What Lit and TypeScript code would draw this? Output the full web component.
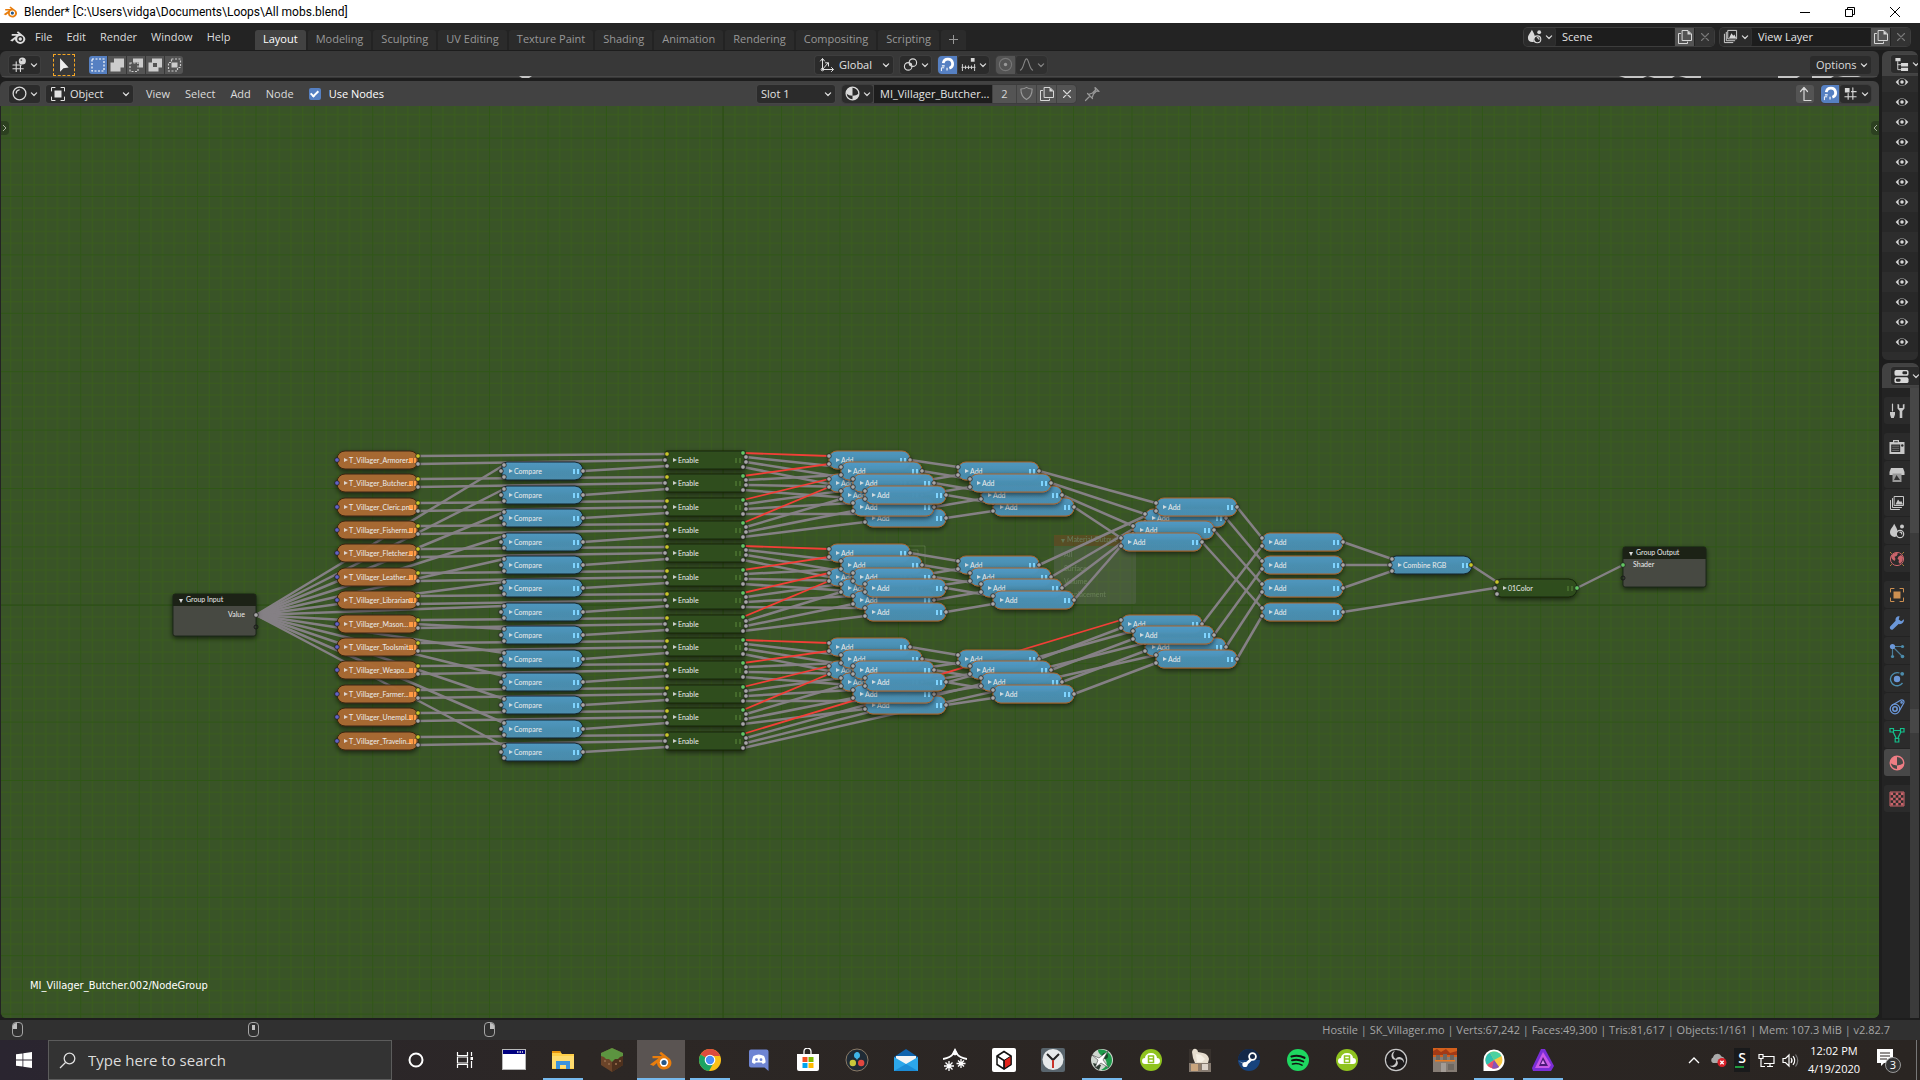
import { LitElement, html, svg, css } from "lit";
import { customElement, property } from "lit/decorators.js";
import { classMap } from "lit/directives/class-map.js";

/* ---------- icons, 16 unit box ---------- */
const S = (body: unknown, w = 1.2) => svg`<g fill="none" stroke="currentColor" stroke-width=${w} stroke-linecap="round" stroke-linejoin="round">${body}</g>`;
const F = (body: unknown) => svg`<g fill="currentColor">${body}</g>`;

const DROP = svg`${F(svg`<path d="M5.2 .8 C6.5 3.5 8.6 6 8.6 9 C7 10 6.8 12 7.4 13.6 C4 14.6 1 12.8 1 9.6 C1 6 4 3.8 5.2 .8Z"/><circle cx="13" cy="3.4" r="2"/>`)}${S(svg`<circle cx="11" cy="11" r="3.7"/><path d="M11 9.2a1.8 1.8 0 0 1 1.8 1.8"/>`)}`;
const PICS = svg`${S(svg`<path d="M5.5 1.5h9v9h-9z"/><path d="M3.5 3.5v9h9M1.5 5.5v9h9"/>`, 1)}${F(svg`<path d="M6.5 9.5l2.5-5 2 2.6 1.2-1.2 1.8 3.6z"/>`)}`;
const BALL = svg`<circle cx="8" cy="8" r="6.8" fill="none" stroke="currentColor" stroke-width="1.4"/><path d="M8 1.2A6.8 6.8 0 0 0 1.2 8q3 2.400 6.800 2.400V1.200zM8 10.400v4.400A6.800 6.800 0 0 0 14.800 8Q12 10.400 8 10.400z" fill="currentColor"/>`;
const ICONS: Record<string, unknown> = {
  blender: svg`<path d="M1 11.2 L6.6 6.9 H2.4 V5.4 H8.6 L6.9 4 L8 2.8 L13.2 7 A4.6 4.2 0 1 1 5.3 10 L3 12z" fill="currentColor"/><circle cx="10" cy="9.8" r="2.7" fill="#232323"/><circle cx="10" cy="9.8" r="1.5" fill="currentColor"/>`,
  chevron: S(svg`<path d="M4.5 6.5 8 10l3.5-3.5"/>`, 1.6),
  grid3d: svg`${S(svg`<path d="M1 8.5h9M1 12.5h11M4.5 5v10.5M9 9v6.5"/>`)}${F(svg`<circle cx="11" cy="4.3" r="3.8"/>`)}<circle cx="10" cy="3.3" r="1" fill="#555"/>`,
  shader: S(svg`<circle cx="8" cy="8" r="6.8"/><path d="M4.5 7.5a3.6 3.6 0 0 1 3.2-3.4"/>`, 1.4),
  cursor: F(svg`<path d="M4.5 2v12l3-3.2 4.6-.6z"/>`),
  object: svg`${S(svg`<path d="M1.5 5V1.5H5M11 1.5h3.500V5M14.500 11v3.500H11M5 14.500H1.500V11"/>`, 1)}${F(svg`<path d="M4.500 4.500h7v7h-7z"/>`)}`,
  m0: svg`<path d="M2 2h12v12H2z" fill="none" stroke="#fff" stroke-width="1.200" stroke-dasharray="2 1.500"/>`,
  m1: F(svg`<path d="M5 1.500h10v9h-3.500V14.500h-10v-9H5z"/>`),
  m2: svg`<path d="M2 6h8v8.500H2z" fill="none" stroke="currentColor" stroke-width="1.200" stroke-dasharray="2 1.500"/>${F(svg`<path d="M5 1.500h10v9h-4V5.500H5z"/>`)}`,
  m3: svg`<path d="M5 1.500h10v9h-3.500V14.500h-10v-9H5z M6 6v4h4V6z" fill="currentColor" fill-rule="evenodd"/>`,
  m4: svg`<path d="M5.500 2h9v8.500h-3V14h-9V5.500h3z" fill="none" stroke="currentColor" stroke-width="1.200" stroke-dasharray="2 1.500"/>${F(svg`<path d="M5.500 5.500h6v5h-6z"/>`)}`,
  axes: S(svg`<path d="M3.500 2v10.500H14M3.500 12.500 9 6M1.500 4l2-2.500 2 2.500M12.500 10.500l2 2-2 2M6.500 5.800H9.500V9"/><circle cx="3.500" cy="12.500" r="1.300"/>`, 1),
  pivot: svg`${S(svg`<circle cx="5.500" cy="10" r="4"/><circle cx="10.500" cy="6" r="4"/>`)}${F(svg`<circle cx="8" cy="8" r="1.500"/>`)}`,
  magnet: svg`<path d="M3.500 6.500A5 5 0 1 1 10 12" fill="none" stroke="#fff" stroke-width="3"/><path d="M2 9.500h3M7.500 14.500v-3" stroke="#fff" stroke-width="1.200"/><path d="M1.500 15v-3.500h3" fill="none" stroke="#fff"/>`,
  ruler: svg`${S(svg`<path d="M1 11h14M1.500 8v6.500M4.800 9.500v3M8 9.500v3M11.200 9.500v3M14.500 8v6.500"/>`, 1)}${F(svg`<path d="M10.500 1h4v4h-4z"/>`)}`,
  prop: svg`${S(svg`<circle cx="8" cy="8" r="6.500" opacity=".5"/>`)}${F(svg`<circle cx="8" cy="8" r="1.800"/>`)}`,
  falloff: S(svg`<path d="M1.500 14C5 13 5.500 2 8 2s3 11 6.500 12"/>`),
  copy: svg`${S(svg`<path d="M5.500 1.500h5.500l3.500 3.500v6.500h-9z"/><path d="M3.500 4.500h-2v10h9v-1.500"/>`, 1)}${F(svg`<path d="M10.500 1.500v4h4z"/>`)}`,
  x: S(svg`<path d="M4 4l8 8M12 4l-8 8"/>`, 1.3),
  shield: S(svg`<path d="M8 1.500c1.800 1.200 3.800 1.700 6 1.700 0 5-1.500 9-6 11.300-4.500-2.300-6-6.300-6-11.300 2.200 0 4.200-.5 6-1.700z"/>`),
  pin: S(svg`<path d="M1.500 14.500 6 10M3.500 7.500l5 5M4.500 8.500l4-1.500 3-3-.5-2.500 4 4-2.500-.5-3 3L8 12"/>`),
  up: S(svg`<path d="M7 14.500V2M3.500 5.500 7 1.500l3.500 4M7 14.500h7"/>`),
  nodegrid: svg`${S(svg`<path d="M10.500 2v12M5.500 8v6M2 11.500h12M9 6h5"/>`)}${F(svg`<path d="M2 2h5v5H2z"/>`)}`,
  drop: DROP,
  pics: PICS,
  ball: BALL,
  tree: svg`${F(svg`<path d="M1.500 1h5.500v3.500H1.500zM7.500 6.500H15V10H7.500zM7.500 11.500H15V15H7.500z"/>`)}${S(svg`<path d="M4 5v8.500h3M4 8.200h3"/>`, 1)}`,
  eye: svg`<path d="M.8 8Q8-.8 15.200 8 8 16.800.8 8z" fill="currentColor"/><circle cx="8" cy="8" r="4" fill="#282828"/><circle cx="8" cy="8" r="2" fill="currentColor"/>`,
  props: svg`<rect x=".5" y="1" width="15" height="6.200" rx="2" fill="currentColor"/><rect x=".5" y="8.800" width="15" height="6.200" rx="2" fill="currentColor"/><rect x="9" y="2.500" width="5" height="3.200" rx="1.200" fill="#2b2b2b"/><rect x="2" y="10.300" width="5" height="3.200" rx="1.200" fill="#2b2b2b"/>`,
  tool: svg`${S(svg`<path d="M3.500 1v7"/>`, 1.2)}${F(svg`<path d="M1 9h5v2.500L4.800 15H2.200L1 11.500zM8.500 1v4.500L10.700 8v7h2.600V8l2.200-2.500V1l-1.700.5V5h-3.600V1.500z"/>`)}`,
  render: svg`${F(svg`<path d="M4 1h6v2h5.500v12H.5V3H4z"/>`)}<path d="M2.200 5.500h9v7.500h-9z" fill="#2b2b2b"/><path d="M5.200 2.200h3.600v1H5.200z" fill="#2b2b2b"/><circle cx="13.300" cy="6.500" r="1.200" fill="#2b2b2b"/><path d="M3.200 7.200h7M3.200 9.300h7M3.200 11.400h7" stroke="#777" stroke-width=".9"/>`,
  output: svg`${F(svg`<path d="M2 1h12l1.500 4v3H.5V5z"/>`)}<path d="M3.500 6.500h9V15h-9z" fill="#999"/><path d="M5 13l2.500-5 3.500 5z" fill="#333"/>`,
  world: svg`<circle cx="8" cy="8" r="6.600" fill="none" stroke="currentColor"/><path d="M4.500 2.500l3-.8 1.500 1-1.500 2.300-2 .8L6.500 8l-1 2-2.500-2L2 5.500zM9.500 5.500l2.500-1.500 2 2-.5 4-2.500 3-1.500-2 .5-2-1.500-1.200z" fill="currentColor"/><path d="M1 1l1.800 1.800M15 1l-1.800 1.800M1 15l1.800-1.800M15 15l-1.800-1.800" stroke="#a8803c"/>`,
  wrench: F(svg`<path d="M15 4.200l-2.800 2-2.500-1.800L10.600 1.200C8 .9 6 3 6.600 5.800L1 11.800c-.8 1.800 1 3.600 2.800 2.800L9.600 9c3 .8 5.600-1.600 5.400-4.800z"/>`),
  particles: svg`<g stroke="#4c7c98" stroke-width="1.200"><path d="M3.500 3.500V13M3.500 3.500H13M3.500 3.500 13.500 13.500"/></g><circle cx="3.500" cy="3.500" r="2.600" fill="currentColor"/><g fill="#4c8cac"><circle cx="13.500" cy="3.500" r="1.600"/><circle cx="3.500" cy="13.500" r="1.600"/><circle cx="13.500" cy="13.500" r="1.800"/></g>`,
  physics: svg`<path d="M10.500 2A6.600 6.600 0 1 0 13.500 12" fill="none" stroke="#4c8cac" stroke-width="1.300"/><circle cx="8" cy="8" r="3.200" fill="currentColor"/><circle cx="13.200" cy="2.800" r="1.900" fill="#4c8cac"/>`,
  constraint: svg`${S(svg`<circle cx="6" cy="10" r="4.800"/><path d="M3 6.200 12 1c2-.6 3.500 1 2.800 3L10.800 11"/><circle cx="12.600" cy="3.400" r=".7"/>`, 1.2)}<circle cx="6" cy="10" r="2.200" fill="none" stroke="currentColor" stroke-width="1.600"/>`,
  mesh: svg`<path d="M3.500 3.500h9L8 13z" fill="none" stroke="currentColor" stroke-width="1.200"/><g fill="#2b2b2b" stroke="currentColor" stroke-width="1.200"><path d="M1 1.500h3.500V5H1zM11.500 1.500H15V5h-3.500zM6.200 11.500h3.600V15H6.200z"/></g>`,
  texture: svg`<path d="M1 1h14v14H1z" fill="none" stroke="currentColor"/>${[0, 1, 2, 3, 4].map((r) => [0, 1, 2, 3, 4].filter((c) => (r + c) % 2 === 0).map((c) => svg`<rect x=${1.5 + c * 2.6} y=${1.5 + r * 2.6} width="2.600" height="2.600" fill="currentColor"/>`))}`,
};
const icon = (n: string, size = 16) => html`<svg class="ic" width=${size} height=${size} viewBox="0 0 16 16" aria-hidden="true">${ICONS[n]}</svg>`;

/* ---------- taskbar artwork, 24 unit box ---------- */
const cloudLogo = svg`<circle cx="12" cy="12" r="11" fill="#8fc31f"/><path d="M6 16a3 3 0 0 1 0-6 6 5 0 0 1 12 0 3 3 0 0 1 0 6z" fill="#fff"/><path d="M9.500 8h5v6.500h-5zM9.500 11h5" fill="none" stroke="#8fc31f" stroke-width="1.500"/>`;
const blenderLogo = svg`<path d="M1 16.500 L9.500 10.300 H3.500 V8 H13 L10.300 5.500 L12 3.800 L20.500 10.500 A7.200 6.600 0 1 1 8 15 L4.500 18z" fill="#e87d0d"/><circle cx="15" cy="14.500" r="4.200" fill="#fff"/><circle cx="15" cy="14.500" r="2.600" fill="#265787"/>`;
const APPS: { name: string; art: unknown; on?: string }[] = [
  { name: "Cortana", art: svg`<circle cx="12" cy="12" r="6.500" fill="none" stroke="#fff" stroke-width="2"/>` },
  { name: "Task View", art: svg`<g fill="none" stroke="#fff" stroke-width="1.200"><path d="M4.500 4v3.500h10V4M4.500 20v-3.500h10V20M4.500 9h10v6h-10zM18.500 4v4M18.500 13v7"/></g><path d="M17.500 9h2.500v3h-2.500z" fill="#fff"/>` },
  { name: "Window", art: svg`<path d="M0 1h24v21H0z" fill="#b8b8b8"/><path d="M1 2h22v4H1z" fill="#000080"/><path d="M1 6h22v15H1z" fill="#fff"/><path d="M15 4h6" stroke="#ddd" stroke-width="1.500" stroke-dasharray="1.500 1"/>` },
  { name: "File Explorer", on: "run", art: svg`<path d="M1 3h8l2 3h12v15H1z" fill="#ffcf48"/><path d="M1 3h8l1 2H1z" fill="#e8940c"/><path d="M1 8h22v12H1z" fill="#ffdc6e"/><path d="M5 21v-8h14v8h-4v-4H9v4z" fill="#3a93dd"/>` },
  { name: "Minecraft", art: svg`<path d="M12 0l11 5v12l-11 7-11-7V5z" fill="#6b4429"/><path d="M12 12l11-6v11l-11 7z" fill="#4d301d"/><path d="M12 0l11 5v3l-3 1-2 2-3 0-3 3-3-3-3 0-2-2-3-1V5z" fill="#5c9440"/><path d="M4 12h2v2H4zM8 15h2v2H8zM15 15h2v2h-2zM19 12h2v2h-2z" fill="#8b6243"/>` },
  { name: "Blender", on: "active", art: blenderLogo },
  { name: "Chrome", on: "run", art: svg`<circle cx="12" cy="12" r="11" fill="#fbc116"/><path d="M12 12 2.500 6.500A11 11 0 0 1 21.500 6.500L22 8H12z" fill="#dd4b3e"/><path d="M12 12 2.500 6.500A11 11 0 0 0 11 23l4.500-8z" fill="#1da362"/><circle cx="12" cy="12" r="5.300" fill="#fff"/><circle cx="12" cy="12" r="4.200" fill="#4a8cf5"/>` },
  { name: "Discord", art: svg`<path d="M4 1.500h15.500A2 2 0 0 1 21.500 3.500V23l-4-3.500H4a2 2 0 0 1-2-2v-14a2 2 0 0 1 2-2z" fill="#6f85d3"/><path d="M6.500 8c3.500-2 7-2 10.500 0 1 2 1.800 4.500 1.500 6.500-1 1-2 1.300-3 1.300l-.8-1.300h-6l-.7 1.300c-1 0-2-.5-3-1.300-.3-2 .5-4.500 1.500-6.500z" fill="#fff"/><circle cx="9.500" cy="11.700" r="1.400" fill="#6f85d3"/><circle cx="14" cy="11.700" r="1.400" fill="#6f85d3"/>` },
  { name: "Microsoft Store", art: svg`<path d="M8 7V3.500a3.500 3.500 0 0 1 7 0V7" fill="none" stroke="#fff" stroke-width="1.300"/><path d="M1 6h22v15a2 2 0 0 1-2 2H3a2 2 0 0 1-2-2z" fill="#fff"/><path d="M6.500 9h5v5h-5z" fill="#f25022"/><path d="M12.500 9h5v5h-5z" fill="#7fba00"/><path d="M6.500 15h5v5h-5z" fill="#00a4ef"/><path d="M12.500 15h5v5h-5z" fill="#ffb900"/>` },
  { name: "DaVinci Resolve", art: svg`<circle cx="12" cy="12" r="11" fill="#1f2b36" stroke="#8a7a66"/><path d="M12 12C9 8 9 4.500 12 4s3 4 0 8z" fill="#3fa9e0"/><circle cx="12" cy="7.500" r="3" fill="#3fb5e8"/><circle cx="7.800" cy="15" r="3.200" fill="#c9c83a"/><circle cx="16.200" cy="15" r="3.200" fill="#e2473f"/>` },
  { name: "Mail", art: svg`<path d="M0 9 12 1l12 8v14H0z" fill="#0f63ad"/><path d="M2 8h20v8H2z" fill="#f4f4f4"/><path d="M0 9l12 7 12-7v14H0z" fill="#2ca7ea"/><path d="M0 23 12 16l12 7z" fill="#1b8cd6"/>` },
  { name: "Weather", art: svg`<path d="M0 11c5-1 8-2 10-5l2-4 2 4c2 3 5 4 10 5" fill="none" stroke="#fff" stroke-width="1.800"/><path d="M9 6l3-5 3 5-3 1.500z" fill="#fff"/><g stroke="#fff" stroke-width="1.300"><path d="M6 13v10M1 18h10M2.500 14.500l7 7M9.500 14.500l-7 7M18 11v9M13.500 15.500h9M15 12.500l6 6M21 12.500l-6 6"/></g>` },
  { name: "Block Editor", art: svg`<rect width="24" height="24" rx="2" fill="#fff"/><path d="M12 3.500 19 8v8.500l-7 4.500-7-4.500V8z" fill="#fff" stroke="#111" stroke-width="1.500"/><path d="M12 12.500 19 8v8.500l-7 4.500z" fill="#e2231a" stroke="#111"/><path d="M5 8l7 4.500V21" fill="none" stroke="#111" stroke-width="1.500"/>` },
  { name: "Clock", art: svg`<rect width="24" height="24" rx="2" fill="#59656d"/><circle cx="12" cy="11.500" r="10.500" fill="#e6e9ea"/><path d="M6 6l6 6 6-6" fill="none" stroke="#222" stroke-width="2"/><path d="M12 12v8" stroke="#c8342b" stroke-width="2"/>` },
  { name: "Aircraft", on: "run", art: svg`<circle cx="12" cy="12" r="11" fill="#cfd6cf"/><path d="M8 2c6-2 14 3 14 10s-6 11-11 10c6-3 7-7 4-11S8 6 8 2z" fill="#1e9a4a"/><path d="M3 15a10 10 0 0 0 6 7l2-5z" fill="#2c3a30"/><circle cx="15" cy="8" r="3" fill="#111" opacity=".6"/><path d="M2 7l7 3 9-7-5 9 6 8-8-5-6 5 3-8z" fill="#fff" stroke="#444" stroke-width=".6"/>` },
  { name: "Cloud Backup", art: cloudLogo },
  { name: "Photo", art: svg`<path d="M1 1h22v23H1z" fill="#38322e"/><path d="M1 15h22v9H1z" fill="#857a70"/><path d="M4 4q1-4 4-3 2 1 2 3l5 1q5 1 6 6l-1 4H7L5 10z" fill="#e6ddcf"/><path d="M8 6l5 1 4 4-3 3H9z" fill="#f5efe4"/><path d="M3 16h7v7H3z" fill="#c9a57e"/><path d="M14 16h6v6h-6z" fill="#ddd3ca"/><path d="M10 15h3v8h-3z" fill="#8d7a69"/>` },
  { name: "Steam", art: svg`<circle cx="12" cy="12" r="11" fill="#17437d"/><path d="M1 12a11 11 0 0 1 22 0z" fill="#132748"/><circle cx="15.500" cy="8.500" r="3.400" fill="none" stroke="#fff" stroke-width="1.800"/><path d="M1.500 13l6 2.500L13 10.500l2 2-5.500 5z" fill="#fff"/><circle cx="8" cy="16.500" r="2.600" fill="#fff"/>` },
  { name: "Spotify", art: svg`<circle cx="12" cy="12" r="11" fill="#1ed760"/><g fill="none" stroke="#111" stroke-linecap="round"><path d="M5.500 8.500c4.500-1.300 9-.8 13 1.300" stroke-width="2.200"/><path d="M6 12.300c4-1 7.700-.6 11.300 1.200" stroke-width="1.900"/><path d="M6.500 16c3.300-.8 6.500-.5 9.500 1.100" stroke-width="1.600"/></g>` },
  { name: "Cloud Sync", art: cloudLogo },
  { name: "OBS Studio", art: svg`<circle cx="12" cy="12" r="10.600" fill="#1d1b1c" stroke="#c8c8c8" stroke-width="1.200"/><g fill="#c8c8c8"><path d="M11 3c-3 3-2 7 2 8.500-3 1-5-.5-5.500-3S8.500 3.500 11 3z"/><path d="M20 15c-1-4-5-5-8.500-2.500C12 9.500 14 8.500 16.500 9.200S20.500 12.500 20 15z"/><path d="M5.500 17.500c4 1.300 7-1.500 6.500-5.700 2.500 2 2.300 4.500.5 6.300s-5 1.200-7-.6z"/></g>` },
  { name: "Sunset", art: svg`<path d="M0 0h24v24H0z" fill="#857c74"/><path d="M0 0h24v9H0z" fill="#d4601c"/><path d="M0 3l4-2 4 3 5-3 4 4 7-2v4H0z" fill="#a33a16"/><path d="M3 7h4v6H3zM10 6h4v7h-4zM17 7h4v6h-4z" fill="#6e655e"/><path d="M2 12h20v1.500H2z" fill="#e8791f"/><path d="M8 15h5v9H8z" fill="#a39c96"/><path d="M15 16h6v6h-6z" fill="#6f6861"/>` },
  { name: "Paint Drop", on: "run", art: svg`<path d="M1.500 12A10.500 10.500 0 0 1 22.500 12 10.500 10.500 0 0 1 12 23H1.500z" fill="#fff"/><circle cx="12" cy="12" r="8.500" fill="#f7c843"/><path d="M12 12 5 17A8.500 8.500 0 0 1 8 4.500z" fill="#2fc0b2"/><path d="M12 12 8 4.500A8.500 8.500 0 0 1 19.500 8z" fill="#4bd2a0"/><path d="M12 12 5 17A8.500 8.500 0 0 0 17 19z" fill="#e94f6e"/><path d="M12 12l-2 8.300A8.500 8.500 0 0 0 17 19z" fill="#8655b8"/>` },
  { name: "Affinity", on: "run", art: svg`<path d="M10 1h4l9 17-3 5H2l-1-3z" fill="#7b2ed6"/><path d="M12 4 4 20h14l2-3z" fill="#c957e8"/><path d="M12 9l-4 9h9z" fill="#4c1a78"/><path d="M12 12l-2 4h4z" fill="#e08af2"/>` },
];

/* ---------- node graph ---------- */
const PITCH = 23.4;
const row = (n: number) => Math.round(459.75 + PITCH * n);
type Sock = [number, number, string];
interface GNode { x: number; y: number; label: string; kind: string; socks: Sock[] }
const GREY = "#a8a8a8", YEL = "#c7c729", GRN = "#63c763", BLU = "#6363c7";
const TEX = ["Armorer..", "Butcher...", "Cleric.pn..", "Fisherm...", "Fletcher...", "Leather...", "Librarian...", "Mason...", "Toolsmit...", "Weapo...", "Farmer...", "Unempl...", "Travelin..."];
const add = (x: number, y: number): GNode => ({ x, y, label: "Add", kind: "add", socks: [[0, -4, GREY], [0, 4, GREY], [81, 0, GREY]] });

const first: GNode[] = TEX.map((t, i) => ({ x: 337, y: row(i), label: "T_Villager_" + t, kind: "tex", socks: [[0, 0, BLU], [81, -4, YEL], [81, 4, GREY]] }));
const compares: GNode[] = TEX.map((_, i) => ({ x: 502, y: row(i + 0.5), label: "Compare", kind: "math", socks: [[2, -6, GREY], [-1, 0, GREY], [2, 6, GREY], [81, 0, GREY]] }));
const enables: GNode[] = TEX.map((_, i) => ({ x: 666, y: row(i), label: "Enable", kind: "group", socks: [[1, -6, YEL], [-1, 0, GREY], [1, 6, GREY], [77, -7, GRN], [80, -3, GREY], [80, 2, GREY], [77, 7, GREY]] }));

const links: { p: number[]; red?: boolean }[] = [];
const link = (a: GNode, i: number, b: GNode, j: number, red = false) => links.push({ p: [a.x + a.socks[i][0], a.y + a.socks[i][1], b.x + b.socks[j][0], b.y + b.socks[j][1]], red });
TEX.forEach((_, i) => {
  links.push({ p: [256, 615, 504, compares[i].y - 6] });
  link(first[i], 1, enables[i], 0);
  link(first[i], 2, enables[i], 1);
  link(compares[i], 3, enables[i], 2);
});
const XA = [829, 841, 853, 865], XB = [958, 970, 981, 993], XC = [1156, 1145, 1133, 1121];
const adds: GNode[] = [];
const stage2: GNode[][] = [];
for (let g = 0; g < 3; g++) {
  const upper = XA.map((x, k) => add(x, row(g * 4 + k / 2)));
  const lower = XA.map((x, k) => add(x, row(g * 4 + 1 + k / 2)));
  const out = XB.map((x, k) => add(x, row(g * 4 + 0.5 + k / 2)));
  for (let k = 0; k < 4; k++) {
    link(enables[g * 4], 3 + k, upper[k], 0, k === 0);
    link(enables[g * 4 + 1], 3 + k, upper[k], 1, k === 0);
    link(enables[g * 4 + 2], 3 + k, lower[k], 0, k === 0);
    link(enables[g * 4 + 3], 3 + k, lower[k], 1, k === 0);
    link(upper[k], 2, out[k], 0);
    link(lower[k], 2, out[k], 1);
  }
  const tail = g === 1 ? [upper[2], upper[3], lower[3]] : [upper[2], upper[3]];
  const head = g === 1 ? [] : [lower[3]];
  adds.push(upper[0], lower[0], lower[1], ...head, upper[1], lower[2], ...tail);
  adds.push(...(g === 0 ? [out[3], out[2], out[0], out[1]] : out));
  stage2.push(out);
}
const topC = XC.map((x, k) => add(x, row(2 + k / 2)));
const lowC = [...XC].reverse().map((x, k) => add(x, row(7 + k / 2)));
const sum = [0, 1, 2, 3].map((k) => add(1262, row(3.5 + k)));
const combine: GNode = { x: 1391, y: row(4.5), label: "Combine RGB", kind: "math", socks: [[1, -6, GREY], [-1, 0, GREY], [1, 6, GREY], [80, 0, YEL]] };
const color: GNode = { x: 1496, y: row(5.5), label: "01Color", kind: "group", socks: [[1, -6, YEL], [-1, 0, GREY], [1, 6, GREY], [81, 0, GRN]] };
for (let k = 0; k < 4; k++) {
  link(stage2[0][k], 2, topC[k], 0);
  link(stage2[1][k], 2, topC[k], 1);
  link(enables[12], 3 + k, lowC[k], 0, k === 0);
  link(stage2[2][k], 2, lowC[k], 1);
  link(topC[k], 2, sum[k], 0);
  link(lowC[k], 2, sum[k], 1);
}
link(sum[0], 2, combine, 0);
link(sum[1], 2, combine, 1);
link(sum[2], 2, combine, 2);
link(sum[3], 2, color, 1);
link(combine, 3, color, 0);
links.push({ p: [1577, color.y, 1623, 565] });
const nodes: GNode[] = [...first, ...compares, ...enables, ...adds, topC[1], topC[0], topC[2], topC[3], lowC[0], lowC[2], lowC[1], lowC[3], ...sum, combine, color];

const shapes: Record<string, { fill: string; edge: string; bars: string }> = {
  tex: { fill: "#ad6b33", edge: "#3a2411", bars: "#ff9a45" },
  math: { fill: "url(#blue)", edge: "#12242c", bars: "#7fd4ff" },
  add: { fill: "url(#blue)", edge: "#a8632f", bars: "#7fd4ff" },
  group: { fill: "#2f4f1c", edge: "#16260d", bars: "#5d8a3c" },
};
const sock = (x: number, y: number, c: string) => svg`<circle cx=${x} cy=${y} r="2.300" fill=${c} stroke="#1a1a1a" stroke-width=".7"/>`;
const drawNode = (n: GNode) => {
  const s = shapes[n.kind];
  const w = n.label === "Enable" ? 79 : 81;
  const body = n.kind === "tex" || n.kind === "add"
    ? svg`<rect x=${n.x} y=${n.y - 9} width=${w} height="18" rx="8"/>`
    : n.label === "Enable"
      ? svg`<rect x=${n.x} y=${n.y - 9} width=${w} height="18" rx="1"/>`
      : svg`<path d="M${n.x + 5} ${n.y - 9}h${w - 13}q8 1 8 9t-8 9h-${w - 13}q-5-1-5-5v-8q0-4 5-5z"/>`;
  const bx = n.x + w - 9;
  return svg`<g>
    <g fill=${s.fill} fill-opacity=".93" stroke=${s.edge} filter="url(#shadow)">${body}</g>
    <path d=${`M${n.x + 7} ${n.y - 2}l4 2-4 2z`} fill="#e6e6e6" fill-opacity=".85"/>
    <path d=${n.kind === "tex" ? `M${bx + 1} ${n.y - 2}v5M${bx + 3} ${n.y - 2}v5M${bx + 6} ${n.y - 2}v5` : `M${bx} ${n.y - 2}v5M${bx + 4} ${n.y - 2}v5`} stroke=${s.bars} stroke-width=${n.kind === "group" ? 1 : 2}/>
    <text class="nt" x=${n.x + 12} y=${n.y + 3}>${n.label}</text>
    ${n.socks.map(([dx, dy, c]) => sock(n.x + dx, n.y + dy, c))}
  </g>`;
};
const openNode = (x: number, y: number, h: number, title: string) => svg`
  <g filter="url(#shadow)"><rect x=${x} y=${y} width="83" height=${h} rx="2" fill="#464a42" stroke="#1d2418"/>
  <path d="M${x} ${y + 12}v-10q0-2 2-2h79q2 0 2 2v10z" fill="#1b2416"/></g>
  <path d="M${x + 6} ${y + 5}h4l-2 4z" fill="#ddd"/><text class="nt" x=${x + 13} y=${y + 8}>${title}</text>`;

const graph = svg`
  <defs>
    <pattern id="fine" width="58.4" height="58.4" patternUnits="userSpaceOnUse" x="255.500" y="137.600">
      <path d="M12.200 0v58.400M23.800 0v58.400M35.500 0v58.400M47.200 0v58.400M0 12.200h58.400M0 23.800h58.400M0 35.500h58.400M0 47.200h58.400" stroke="#3a6118" stroke-opacity=".7"/>
      <path d="M.5 0v58.400M0 .5h58.400" stroke="#2f5616"/>
    </pattern>
    <linearGradient id="blue" x1="0" y1="0" x2="0" y2="1"><stop offset="0" stop-color="#529cc9"/><stop offset=".5" stop-color="#4b93b8"/><stop offset="1" stop-color="#4b90b2"/></linearGradient>
    <filter id="shadow" x="-20%" y="-50%" width="140%" height="220%"><feDropShadow dx="0" dy="2" stdDeviation="2.500" flood-color="#000" flood-opacity=".6"/></filter>
  </defs>
  <g transform="translate(0 -106)">
    <rect x="0" y="106" width="100%" height="100%" fill="#395427"/>
    <rect x="0" y="106" width="100%" height="100%" fill="url(#fine)"/>
    <path d="M723 106v2000M0 605h9000" stroke="#2c4d17"/>
    <g opacity=".25"><rect x="1054" y="535" width="82" height="69" rx="2" fill="#777"/><path d="M1054 535h82v11h-82z" fill="#b23a20"/>
      <path d="M1061 539h4l-2 4z" fill="#ddd"/>
      <text class="nt" x="1067" y="542">Material Output</text><text class="nt" x="1064" y="557">All</text><text class="nt" x="1064" y="571">Surface</text><text class="nt" x="1064" y="584">Volume</text><text class="nt" x="1064" y="597">Displacement</text>
      <path d="M904 546h21v18h-16M904 550h14v10" fill="none" stroke="#b5c49a"/></g>
    <g fill="none" stroke="#858085" stroke-width="2.500">${links.filter((l) => !l.red).map(({ p }) => svg`<path d=${`M${p[0]} ${p[1]}L${p[2]} ${p[3]}`}/>`)}</g>
    <g fill="none" stroke="#f23f38" stroke-width="1.800">${links.filter((l) => l.red).map(({ p }) => svg`<path d=${`M${p[0]} ${p[1]}L${p[2]} ${p[3]}`}/>`)}</g>
    ${openNode(173, 594, 42, "Group Input")}
    <text class="nt" x="228" y="617">Value</text>${sock(256, 615, GREY)}<circle cx="256" cy="627" r="2" fill="none" stroke="#1a1a1a"/>
    ${nodes.map(drawNode)}
    ${openNode(1623, 547, 40, "Group Output")}
    <text class="nt" x="1633" y="567">Shader</text>${sock(1623, 565, GRN)}<circle cx="1623" cy="578" r="2" fill="none" stroke="#1a1a1a"/>
  </g>`;

const controls = css`
  * { box-sizing: border-box; }
  button, input, select { font: inherit; color: inherit; margin: 0; padding: 0; border: 0; background: none; border-radius: 0; }
  svg { display: block; flex: none; }
`;

/** Drop-down that shows an icon and a chevron. */
@customElement("icon-menu")
class IconMenu extends LitElement {
  @property() icon = "";
  @property() label = "";
  static styles = [controls, css`
    :host { display: block; flex: none; }
    .b { display: flex; align-items: center; gap: 1px; height: 18px; width: 31px; padding-left: 3px; background: #2b2b2b; border-radius: 3px; color: #d8d8d8; box-shadow: 0 0 0 1px #4a4a4a55; overflow: hidden; }
    :host([dim]) .b { color: #858585; background: #303030; }
  `];
  render() {
    return html`<button class="b" aria-label=${this.label}>${icon(this.icon, 15)}${icon("chevron", 12)}</button>`;
  }
}

/** The whole desktop: application window above the taskbar. */
@customElement("app-root")
class AppRoot extends LitElement {
  static styles = [controls, css`
    :host { display: block; font: 11px/14px "Open Sans", "Noto Sans", sans-serif; color: #dcdcdc; }
    .page { display: flex; flex-direction: column; min-height: 100vh; background: #1d1d1d; overflow: hidden; }
    .title { display: flex; align-items: center; height: 23px; background: #fff; color: #000; padding: 0 3px; gap: 6px; font: 12px/16px Roboto, "Noto Sans", sans-serif; }
    .title h1 { font: inherit; margin: 0; flex: 1; }
    .wc { display: flex; }
    .wc button { width: 45px; height: 23px; display: grid; place-items: center; }
    .menubar { display: flex; align-items: center; height: 27px; background: #232323; padding: 0 10px 0 9px; }
    .brand { width: 26px; color: #ddd; }
    .menus { display: flex; gap: 14px; width: 220px; }
    .tabs { display: flex; gap: 2px; align-self: flex-end; flex: 1; }
    .tabs button { height: 20px; padding: 0 8px 2px; background: #2b2b2b; color: #989898; border-radius: 3px 3px 0 0; }
    .tabs .on { background: #424242; color: #fff; }
    .data { display: flex; gap: 6px; }
    .group { display: flex; gap: 1px; border-radius: 4px; overflow: hidden; box-shadow: 0 0 0 1px #3d3d3d; }
    .field { width: 118px; height: 18px; background: #1d1d1d; padding: 0 0 0 6px; color: #e4e4e4; }
    .sq { width: 19px; height: 18px; display: grid; place-items: center; background: #545454; color: #d8d8d8; }
    .sq.off { background: #333; color: #777; }
    .sq.num { width: 23px; }
    .sq.dim { color: #999; }
    .sq.blue { background: #5680c2; color: #fff; }
    .round { border-radius: 3px; }
    .work { display: flex; flex: 1; gap: 3px; padding-top: 1px; }
    .left { flex: 1; min-width: 0; display: flex; flex-direction: column; gap: 3px; }
    .bar { display: grid; grid-template-columns: 806fr 981fr 75px; align-items: center; padding: 0 8px 0 9px; }
    .bar > div { display: flex; align-items: center; }
    .bar > .end { justify-content: flex-end; }
    .toolbar { height: 27px; background: #383838; border-radius: 6px; position: relative; overflow: hidden; }
    .peek { position: absolute; left: 0; right: 0; bottom: 0; width: 100%; height: 2px; }
    .nodebar { height: 25px; background: #424242; border-radius: 6px 6px 0 0; grid-template-columns: 748fr 1039fr 75px; }
    .editor { display: flex; flex-direction: column; flex: 1; }
    .cur { width: 22px; height: 22px; margin: 0 14px 0 13px; border: 1px dashed #f5a623; display: grid; place-items: center; color: #eee; }
    .modes { display: flex; border-radius: 3px; overflow: hidden; gap: 1px; }
    .modes .sq { width: 18px; color: #ccc; }
    .g7 { gap: 7px; }
    .pick { position: relative; display: flex; align-items: center; height: 18px; border-radius: 3px; background: #2b2b2b; box-shadow: 0 0 0 1px #4a4a4a55; color: #e2e2e2; padding-left: 4px; gap: 4px; }
    .pick select { appearance: none; height: 18px; flex: 1; min-width: 0; outline: 0; }
    .pick .ic:last-child { position: absolute; right: 1px; pointer-events: none; }
    .w78 { width: 78px; } .w87 { width: 87px; }
    .opts { display: flex; align-items: center; height: 18px; width: 61px; justify-content: space-between; background: #2b2b2b; border-radius: 3px; padding: 0 1px 0 6px; }
    .shaderkind { margin-left: 6px; }
    .nmenus { display: flex; gap: 15px; margin: 0 15px 0 13px; }
    .chk { display: flex; align-items: center; gap: 8px; color: #fff; }
    .chk input { appearance: none; width: 12px; height: 12px; border-radius: 2px; background: #5680c2; display: grid; place-items: center; }
    .chk input::after { content: ""; width: 3px; height: 6px; margin-bottom: 2px; border: solid #fff; border-width: 0 2px 2px 0; transform: rotate(45deg); }
    .pin { color: #999; margin-left: 1px; }
    .canvas { position: relative; flex: 1; border-left: 1px solid #232323; border-radius: 0 0 6px 6px; overflow: hidden; min-height: 600px; background: #395427; }
    .canvas .graph { position: absolute; inset: 0 0 0 -1px; width: calc(100% + 1px); height: 100%; }
    .nt { font: 7px Lato, "Noto Sans", sans-serif; fill: #ececec; }
    .path { position: absolute; left: 29px; bottom: 25px; margin: 0; color: #fff; font-family: "DejaVu Sans Condensed", "Open Sans", sans-serif; }
    .flap { position: absolute; top: 15px; width: 8px; height: 14px; background: #2c4020; color: #a8b09f; display: grid; place-items: center; }
    .flap.l { left: 0; border-radius: 0 4px 4px 0; }
    .flap.r { right: 0; border-radius: 4px 0 0 4px; }
    .side { width: 38px; display: flex; flex-direction: column; gap: 3px; }
    .outliner { background: #282828; border-radius: 6px; overflow: hidden; height: 309px; flex: none; margin-right: 2px; }
    .shead { height: 25px; background: #424242; padding: 4px 0 0 9px; overflow: hidden; position: relative; border-radius: 6px 6px 0 0; }
    .rows { list-style: none; margin: -4px 0 0; padding: 0; }
    .rows li { height: 20px; display: grid; place-items: center; padding-left: 4px; color: #d8d8d8; }
    .rows li:nth-child(even) { background: #282828; }
    .rows li:nth-child(odd) { background: #2d2d2d; }
    .props { flex: 1; display: flex; flex-direction: column; background: #232323; margin-right: 1px; border-radius: 6px 6px 0 0; overflow: hidden; }
    .pbody { flex: 1; display: flex; justify-content: space-between; padding-left: 2px; }
    .ptabs { padding-top: 9px; display: flex; flex-direction: column; gap: 1px; }
    .ptabs button { width: 26px; height: 27px; background: #2b2b2b; border-radius: 3px 0 0 3px; display: grid; place-items: center; color: #c8c8c8; }
    .ptabs .gap { margin-top: 8px; }
    .ptabs .on { background: #484848; }
    .ptabs .red { color: #c9646a; } .ptabs .org { color: #cd8f50; } .ptabs .blu { color: #6b97d8; } .ptabs .grn { color: #14c08c; } .ptabs .pnk { color: #ee7d84; }
    .strip { width: 9px; background: #3b3b3b; display: flex; flex-direction: column; }
    .s1 { height: 145px; background: #474747; } .s2 { height: 176px; } .s3 { height: 24px; background: #474747; }
    .status { display: flex; align-items: center; height: 20px; margin-top: 2px; background: #303030; color: #a5a5a5; padding: 0 30px 0 12px; }
    .mice { display: flex; gap: 225px; flex: 1; }
    .status p { margin: 0; }
    .task { display: flex; height: 40px; background: linear-gradient(90deg, #2a2530, #2c2725 30%, #2a2522); color: #fff; }
    .start { width: 48px; display: grid; place-items: center; }
    .search { width: 344px; display: flex; align-items: center; gap: 12px; padding-left: 10px; background: #333; border: 1px solid #5c5c5c; }
    .search input { flex: 1; min-width: 0; font-size: 15px; outline: 0; }
    .search input::placeholder { color: #dcdcdc; opacity: 1; }
    .apps { display: flex; gap: 1px; flex: 1; }
    .apps button { width: 48px; display: grid; place-items: center; border: solid transparent; border-width: 2px 0; position: relative; }
    .apps .active { background: #5a5452; border-bottom-color: #76b9ed; }
    .apps .run::after { content: ""; position: absolute; left: 4px; right: 4px; bottom: -2px; height: 2px; background: #76b9ed; }
    .tray { display: flex; align-items: center; }
    .tray button { width: 24px; height: 40px; display: grid; place-items: center; }
    .tray .clock { display: block; width: 64px; padding: 2px 0; text-align: center; line-height: 18px; }
    .tray .note { width: 44px; margin-right: 6px; }
    .edge { width: 4px; align-self: stretch; border-left: 1px solid #777; }
  `];

  private dataGroup(ic: string, label: string, value: string) {
    return html`<div class="group"><icon-menu icon=${ic} label=${"Browse " + label}></icon-menu>
      <input class="field" aria-label=${label} .value=${value} />
      <button class="sq" aria-label=${"New " + label}>${icon("copy")}</button>
      <button class="sq off" aria-label=${"Remove " + label}>${icon("x", 14)}</button></div>`;
  }

  private mouse(part: string) {
    const d: Record<string, string> = { left: "M1 7V4q0-3 4-3v6z", mid: "M4 3h3v5H4z", right: "M6 1q4 0 4 3v3H6z" };
    return html`<svg width="11" height="16" viewBox="0 0 11 16" aria-hidden="true"><rect x=".5" y=".5" width="10" height="14" rx="3.500" fill="none" stroke="#a5a5a5"/><path d=${d[part]} fill="#c0c0c0"/></svg>`;
  }

  render() {
    const tabs = ["Layout", "Modeling", "Sculpting", "UV Editing", "Texture Paint", "Shading", "Animation", "Rendering", "Compositing", "Scripting"];
    const ptabs: [string, string, string][] = [
      ["tool", "", "Tool"], ["render", "gap", "Render"], ["output", "", "Output"], ["pics", "", "View Layer"], ["drop", "", "Scene"], ["world", "red", "World"],
      ["object", "gap org", "Object"], ["wrench", "blu", "Modifiers"], ["particles", "blu", "Particles"], ["physics", "blu", "Physics"], ["constraint", "blu", "Constraints"], ["mesh", "grn", "Mesh Data"], ["ball", "pnk on", "Material"], ["texture", "gap red", "Texture"],
    ];
    return html`<div class="page">
      <header class="title">
        <svg width="15" height="15" viewBox="0 0 24 24" aria-hidden="true">${blenderLogo}</svg>
        <h1>Blender* [C:\\Users\\vidga\\Documents\\Loops\\All mobs.blend]</h1>
        <div class="wc">
          <button aria-label="Minimize"><svg width="10" height="10"><path d="M0 5.500h10" stroke="#000"/></svg></button>
          <button aria-label="Restore"><svg width="10" height="10" fill="none" stroke="#000"><path d="M.5 2.500h7v7h-7zM2.500 2V.5h7v7H8"/></svg></button>
          <button aria-label="Close"><svg width="10" height="10" stroke="#000"><path d="M0 0l10 10M10 0 0 10"/></svg></button>
        </div>
      </header>
      <nav class="menubar">
        <div class="brand">${icon("blender", 18)}</div>
        <div class="menus">${["File", "Edit", "Render", "Window", "Help"].map((m) => html`<button>${m}</button>`)}</div>
        <div class="tabs">${tabs.map((t, i) => html`<button class=${classMap({ on: i === 0 })}>${t}</button>`)}
          <button class="plus" aria-label="Add workspace"><svg width="9" height="9" stroke="currentColor"><path d="M0 4.500h9M4.500 0v9"/></svg></button></div>
        <div class="data">${this.dataGroup("drop", "Scene", "Scene")}${this.dataGroup("pics", "View Layer", "View Layer")}</div>
      </nav>
      <main class="work">
        <div class="left">
          <section class="bar toolbar">
            <div><icon-menu icon="grid3d" label="Editor type"></icon-menu>
              <button class="cur" aria-label="Select tool">${icon("cursor", 18)}</button>
              <div class="modes">${[0, 1, 2, 3, 4].map((m) => html`<button class=${classMap({ sq: true, blue: m === 0 })} aria-label=${"Select mode " + (m + 1)}>${icon("m" + m)}</button>`)}</div></div>
            <div class="g7">
              <label class="pick w78">${icon("axes")}<select aria-label="Orientation"><option>Global</option></select>${icon("chevron", 12)}</label>
              <icon-menu icon="pivot" label="Pivot point"></icon-menu>
              <div class="group"><button class="sq blue" aria-label="Snap">${icon("magnet", 15)}</button><icon-menu icon="ruler" label="Snap to"></icon-menu></div>
              <div class="group"><button class="sq dim" aria-label="Proportional editing">${icon("prop", 15)}</button><icon-menu dim icon="falloff" label="Falloff"></icon-menu></div>
            </div>
            <div class="end"><button class="opts">Options ${icon("chevron", 12)}</button></div>
            <svg class="peek" viewBox="0 0 1879 2" preserveAspectRatio="none" aria-hidden="true"><path d="M0 .5h1879" stroke="#484848"/><path d="M519 0h13l-3 2h-7zM1619 0h28l-4 2h-18zM1648 0h27l-3 2h-18zM1679 0h22v2h-15zM1778 0h22l-3 2h-19zM1812 0h22l-3 2h-19zM1838 0h23l-3 1h-15z" fill="#c4c4c4"/></svg>
          </section>
          <section class="editor">
            <div class="bar nodebar">
              <div><icon-menu icon="shader" label="Editor type"></icon-menu>
                <label class="pick w87 shaderkind">${icon("object")}<select aria-label="Shader type"><option>Object</option></select>${icon("chevron", 12)}</label>
                <div class="nmenus">${["View", "Select", "Add", "Node"].map((m) => html`<button>${m}</button>`)}</div>
                <label class="chk"><input type="checkbox" checked />Use Nodes</label></div>
              <div class="g7">
                <label class="pick w78"><select aria-label="Material slot"><option>Slot 1</option></select>${icon("chevron", 12)}</label>
                <div class="group"><icon-menu icon="ball" label="Browse material"></icon-menu>
                  <input class="field" aria-label="Material name" .value=${"MI_Villager_Butcher..."} />
                  <button class="sq num">2</button><button class="sq dim" aria-label="Fake user">${icon("shield", 15)}</button>
                  <button class="sq" aria-label="New material">${icon("copy")}</button><button class="sq" aria-label="Unlink material">${icon("x", 14)}</button></div>
                <button class="pin" aria-label="Pin">${icon("pin")}</button>
              </div>
              <div class="g7 end"><button class="sq round" aria-label="Parent node tree">${icon("up")}</button>
                <div class="group"><button class="sq blue" aria-label="Snap">${icon("magnet", 15)}</button><icon-menu icon="nodegrid" label="Snap node to"></icon-menu></div></div>
            </div>
            <div class="canvas">
              <svg class="graph">${graph}</svg>
              <button class="flap l" aria-label="Show tools"><svg width="6" height="8" fill="none" stroke="currentColor"><path d="M1 1l3 3-3 3"/></svg></button>
              <button class="flap r" aria-label="Show sidebar"><svg width="6" height="8" fill="none" stroke="currentColor"><path d="M5 1 2 4l3 3"/></svg></button>
              <p class="path">MI_Villager_Butcher.002/NodeGroup</p>
            </div>
          </section>
        </div>
        <aside class="side">
          <section class="outliner"><div class="shead"><icon-menu icon="tree" label="Editor type"></icon-menu></div>
            <ul class="rows">${Array.from({ length: 15 }, (_, i) => html`<li>${i < 14 ? html`<button aria-label=${"Hide object " + (i + 1)}>${icon("eye", 14)}</button>` : ""}</li>`)}</ul></section>
          <section class="props"><div class="shead"><icon-menu icon="props" label="Editor type"></icon-menu></div>
            <div class="pbody"><div class="ptabs">${ptabs.map(([n, c, l]) => html`<button class=${c} aria-label=${l}>${icon(n)}</button>`)}</div>
              <div class="strip"><div class="s1"></div><div class="s2"></div><div class="s3"></div></div></div></section>
        </aside>
      </main>
      <footer class="status"><div class="mice">${this.mouse("left")}${this.mouse("mid")}${this.mouse("right")}</div>
        <p>Hostile | SK_Villager.mo | Verts:67,242 | Faces:49,300 | Tris:81,617 | Objects:1/161 | Mem: 107.3 MiB | v2.82.7</p></footer>
      <nav class="task">
        <button class="start" aria-label="Start"><svg width="16" height="16" viewBox="0 0 16 16" fill="#fff"><path d="M0 2.300 6.500 1.400V7.600H0zM7.300 1.300 16 0v7.600H7.300zM0 8.400h6.500v6.200L0 13.700zM7.300 8.400H16V16l-8.700-1.300z"/></svg></button>
        <label class="search"><svg width="17" height="17" viewBox="0 0 17 17" fill="none" stroke="#e0e0e0" stroke-width="1.300"><circle cx="10.500" cy="6.500" r="5.300"/><path d="M6.500 10.500 1 16"/></svg><input placeholder="Type here to search" aria-label="Search" /></label>
        <div class="apps">${APPS.map((a) => html`<button class=${a.on ?? ""} aria-label=${a.name}><svg width="24" height="24" viewBox="0 0 24 24">${a.art}</svg></button>`)}</div>
        <div class="tray">
          <button aria-label="Show hidden icons"><svg width="12" height="8" fill="none" stroke="#fff" stroke-width="1.300"><path d="M1 7l5-5 5 5"/></svg></button>
          <button aria-label="OneDrive"><svg width="17" height="14" viewBox="0 0 17 14"><path d="M3 10a3 3 0 0 1 0-5.500 4.500 4.500 0 0 1 8.500-1A3.500 3.500 0 0 1 13 10z" fill="#aaa"/><circle cx="12" cy="9.500" r="4.500" fill="#d8222a"/><path d="M10.300 7.800l3.400 3.400M13.700 7.800l-3.400 3.400" stroke="#fff" stroke-width="1.300"/></svg></button>
          <button aria-label="S app"><svg width="16" height="24" viewBox="0 0 16 24"><path d="M0 0h16v24H0z" fill="#191a1b"/><path d="M1 18h9v2H1z" fill="#1f9a3f"/><text x="8" y="15" font-size="14" font-weight="600" text-anchor="middle" fill="#fff">S</text></svg></button>
          <button aria-label="Network"><svg width="17" height="15" fill="none" stroke="#fff" stroke-width="1.200"><path d="M5 3.500h11v7H6M9 13.500h6M12 11v2.500M1 1.500h4v4H1zM3 5.500v8h4"/></svg></button>
          <button aria-label="Volume"><svg width="17" height="15" fill="none" stroke="#fff" stroke-width="1.200"><path d="M1 5.500h2.500L7 2v11L3.500 9.500H1zM9 5q2 2.500 0 5M11 3.200q3.500 4.300 0 8.600"/><path d="M13.500 1.500q4.500 6 0 12" stroke="#777"/></svg></button>
          <button class="clock">12:02 PM<br />4/19/2020</button>
          <button class="note" aria-label="3 notifications"><svg width="26" height="28" viewBox="0 0 26 28"><path d="M2 3h16v14h-9l-3 3v-3H2z" fill="#fff"/><path d="M5 7h10M5 10h10M5 13h7" stroke="#2a2522"/><circle cx="18" cy="19" r="7.500" fill="#333" stroke="#999"/><text x="18" y="23" font-size="11" text-anchor="middle" fill="#fff">3</text></svg></button>
          <div class="edge"></div>
        </div>
      </nav>
    </div>`;
  }
}
